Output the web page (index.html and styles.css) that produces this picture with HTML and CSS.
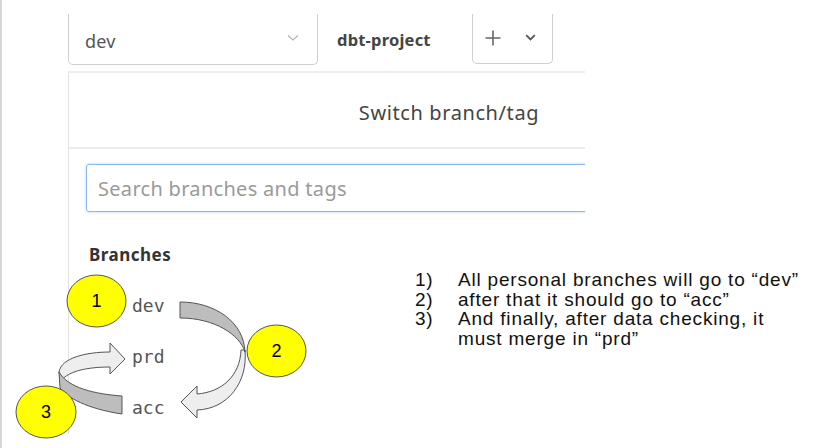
FILE: index.html
```html
<!DOCTYPE html>
<html>
<head>
<meta charset="utf-8">
<link rel="stylesheet" href="styles.css">
</head>
<body>
<div class="page">
  <div class="topbar">
    <div class="select">
      <span class="select-value">dev</span>
      <svg class="chev" width="12" height="8" viewBox="0 0 12 8"><path d="M1 1.5 L6 6 L11 1.5" fill="none" stroke="#b5b5b5" stroke-width="1.3"/></svg>
    </div>
    <span class="project">dbt-project</span>
    <div class="addbtn">
      <svg width="16" height="16" viewBox="0 0 16 16"><path d="M8 0.5 V15.5 M0.5 8 H15.5" stroke="#666" stroke-width="1.6"/></svg>
      <svg width="11" height="7" viewBox="0 0 11 7"><path d="M1.2 1.2 L5.5 5.4 L9.8 1.2" fill="none" stroke="#555" stroke-width="1.8"/></svg>
    </div>
  </div>
  <div class="clip">
    <div class="panel">
      <div class="panel-head">Switch branch/tag</div>
      <div class="search-wrap">
        <div class="search">Search branches and tags</div>
      </div>
      <div class="section">Branches</div>
      <ul class="branches">
        <li>dev</li>
        <li>prd</li>
        <li>acc</li>
      </ul>
    </div>
  </div>

  <svg class="overlay" width="823" height="448" viewBox="0 0 823 448">
    <!-- arrow 2: dev -> acc -->
    <path d="M245,350 C248,382 228,409 197,410 L197,418 L181,402 L197,386 L197,394 C222,392 240,376 241,350 Z" fill="#eeeeee" stroke="#555" stroke-width="1"/>
    <path d="M180,302 C215,302 244,322 245,352 C240,335 215,318 180,318 Z" fill="#bdbdbd" stroke="#555" stroke-width="1"/>
    <!-- arrow 3: acc -> prd -->
    <path d="M59,372 C61,358 86,352 110,352 L110,343 L125,359 L110,374 L110,367 C88,367 68,371 61,381 Z" fill="#eeeeee" stroke="#555" stroke-width="1"/>
    <path d="M122,396 C95,394 68,388 59,372 L60,388 C70,401 95,410 122,414 Z" fill="#bdbdbd" stroke="#555" stroke-width="1"/>
    <!-- circles -->
    <ellipse cx="96.5" cy="301" rx="29.5" ry="26" fill="#ffff00" stroke="#555" stroke-width="1"/>
    <text x="96.5" y="307" class="num">1</text>
    <ellipse cx="276.5" cy="351" rx="29.5" ry="26" fill="#ffff00" stroke="#555" stroke-width="1"/>
    <text x="276.5" y="357" class="num">2</text>
    <ellipse cx="46" cy="412" rx="30" ry="26" fill="#ffff00" stroke="#555" stroke-width="1"/>
    <text x="46" y="418" class="num">3</text>
  </svg>

  <ol class="notes">
    <li><span class="n">1)</span><span>All personal branches will go to “dev”</span></li>
    <li><span class="n">2)</span><span>after that it should go to “acc”</span></li>
    <li><span class="n">3)</span><span>And finally, after data checking, it<br>must merge in “prd”</span></li>
  </ol>
</div>
</body>
</html>
```

FILE: styles.css
```css
html, body {
  margin: 0;
  padding: 0;
  background: #fff;
}
.page {
  position: relative;
  width: 821px;
  height: 448px;
  overflow: hidden;
  border-left: 2px solid #d6d6d6;
  font-family: "Noto Sans", "Open Sans", sans-serif;
}
.topbar {
  display: flex;
  align-items: flex-start;
  padding: 14px 0 0 66px;
}
.select {
  width: 250px;
  height: 51px;
  box-sizing: border-box;
  border: 1px solid #cfcfcf;
  border-top: 0;
  border-radius: 0 0 5px 5px;
  display: flex;
  align-items: center;
  justify-content: space-between;
  padding: 4px 18px 0 16px;
}
.select-value {
  font-size: 18px;
  color: #555;
  letter-spacing: 0.2px;
}
.chev { margin-top: -6px; }
.project {
  width: 154px;
  flex: none;
  box-sizing: border-box;
  padding-left: 19px;
  margin-top: 15px;
  font-size: 16.5px;
  font-weight: 700;
  color: #444;
  line-height: 22px;
  letter-spacing: 0.2px;
}
.addbtn {
  width: 81px;
  height: 50px;
  box-sizing: border-box;
  border: 1px solid #cfcfcf;
  border-top: 0;
  border-radius: 0 0 5px 5px;
  display: flex;
  align-items: center;
  gap: 24px;
  padding: 0 0 2px 12px;
}
.clip {
  margin: 6px 0 0 66px;
  width: 516px;
  height: 361px;
  overflow: hidden;
  border-left: 1px solid #e2e2e2;
  border-top: 2px solid #ededed;
}
.panel {
  width: 760px;
}
.panel-head {
  height: 76px;
  border-bottom: 2px solid #ededed;
  display: flex;
  align-items: center;
  justify-content: center;
  font-size: 20px;
  letter-spacing: 0.6px;
  color: #444;
  padding-top: 4px;
  box-sizing: border-box;
}
.search-wrap {
  padding: 15px 17px 0 17px;
}
.search {
  height: 48px;
  box-sizing: border-box;
  border: 1px solid #8db8ec;
  border-radius: 3px;
  box-shadow: 0 0 3px rgba(110, 165, 235, 0.55);
  display: flex;
  align-items: center;
  padding-left: 11px;
  font-size: 20px;
  letter-spacing: 0.3px;
  color: #9a9a9a;
}
.section {
  margin-top: 32px;
  padding-left: 20px;
  font-size: 17px;
  letter-spacing: 0.5px;
  font-weight: 700;
  color: #333;
  line-height: 22px;
}
.branches {
  list-style: none;
  margin: 14px 0 0 0;
  padding: 0 0 0 63px;
}
.branches li {
  height: 51px;
  line-height: 51px;
  font-family: "DejaVu Sans Mono", monospace;
  font-size: 18px;
  color: #555;
}
.overlay {
  position: absolute;
  left: -2px;
  top: 0;
  pointer-events: none;
}
.num {
  font-family: "Liberation Sans", Arial, sans-serif;
  font-size: 18px;
  text-anchor: middle;
  fill: #000;
}
.notes {
  position: absolute;
  left: 413px;
  top: 270px;
  margin: 0;
  padding: 0;
  list-style: none;
  font-family: "Liberation Sans", Arial, sans-serif;
  font-size: 19px;
  letter-spacing: 0.8px;
  line-height: 19.6px;
  color: #111;
}
.notes li {
  display: flex;
}
.notes .n {
  width: 43px;
  flex: none;
}
```
